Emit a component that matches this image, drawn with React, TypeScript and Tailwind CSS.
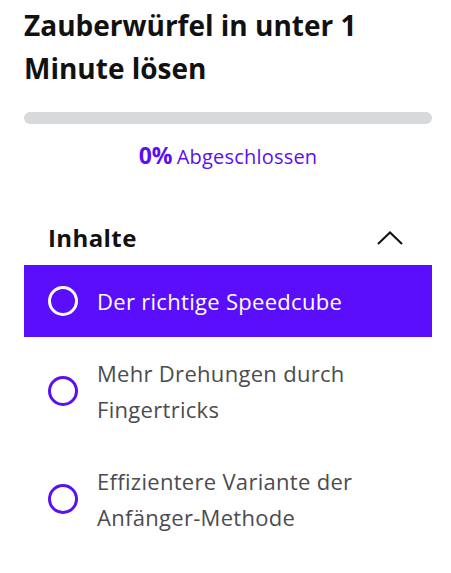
export default function App() {
  const lessons = [
    { title: "Der richtige Speedcube", active: true },
    { title: "Mehr Drehungen durch Fingertricks", active: false },
    { title: "Effizientere Variante der Anfänger-Methode", active: false },
  ];

  return (
    <div className="w-[451px] h-[573px] bg-white pl-6 pr-[19px] pt-[4px] font-['Open_Sans',sans-serif]">
      <h1 className="max-w-[360px] text-[28px] font-bold leading-[43px] text-[#111111]">
        Zauberwürfel in unter 1 Minute lösen
      </h1>

      <div className="mt-[22px] h-3 w-full rounded-full bg-[#d8d9db]" />

      <p className="mt-[16px] text-center leading-[30px] text-[#5a10f0]">
        <span className="text-[23px] font-bold">0%</span>{" "}
        <span className="text-[20px] tracking-[0.2px]">Abgeschlossen</span>
      </p>

      <div className="mt-[45px] flex h-10 items-center justify-between pl-6 pr-[29px]">
        <h2 className="text-[24px] font-bold tracking-[0.4px] text-[#111111]">Inhalte</h2>
        <svg width="26" height="14" viewBox="0 0 26 14" fill="none">
          <path d="M1 13 L13 1.5 L25 13" stroke="#111111" strokeWidth="2" />
        </svg>
      </div>

      <ul className="mt-[7px]">
        {lessons.map((l) => (
          <li
            key={l.title}
            className={`flex items-center gap-[19px] py-[18px] pl-6 pr-6 ${
              l.active ? "bg-[#5a0efc] text-white" : "text-[#4c4c4f]"
            }`}
          >
            <span
              className={`h-[30px] w-[30px] shrink-0 rounded-full border-[3px] ${
                l.active ? "border-white" : "border-[#5a10f0]"
              }`}
            />
            <span className="max-w-[290px] text-[22px] leading-[36px] tracking-[0.3px]">
              {l.title}
            </span>
          </li>
        ))}
      </ul>
    </div>
  );
}
